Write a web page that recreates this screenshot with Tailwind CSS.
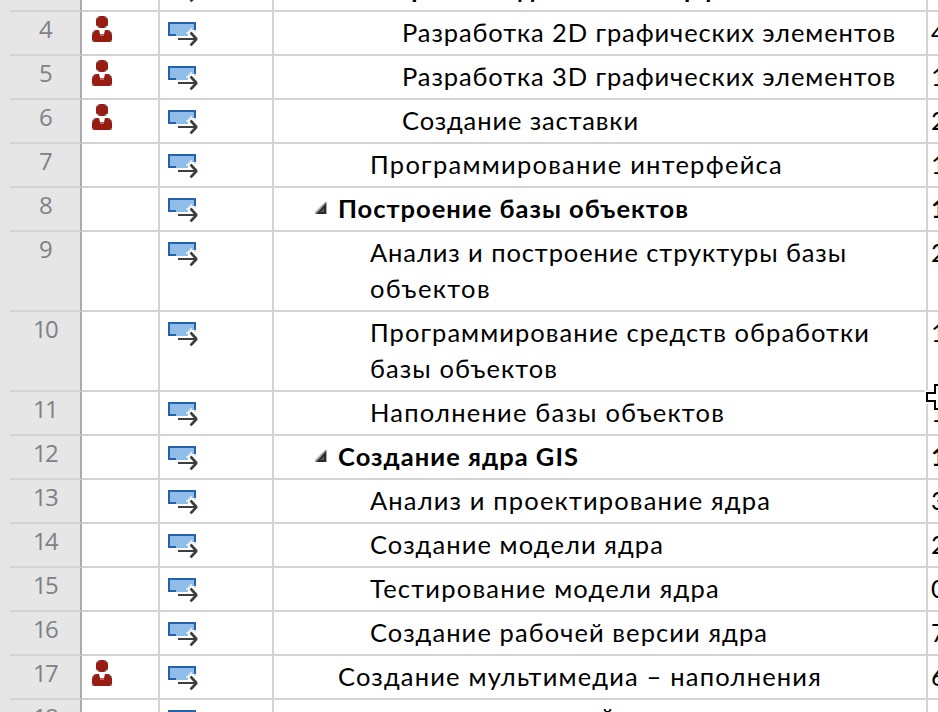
<!DOCTYPE html>
<html lang="ru">
<head>
<meta charset="utf-8">
<title>Задачи проекта</title>
<script src="https://cdn.jsdelivr.net/npm/@tailwindcss/browser@4"></script>
</head>
<body class="bg-white">
<svg class="hidden">
  <symbol id="person" viewBox="0 0 20 26">
    <path fill="#981c12" d="M8 0h4l2 1 2 2v6l-2 2-2 1H8l-2-1-2-2V3l2-2z"/>
    <path fill="#981c12" d="M3 14h4l1 4h4l1-4h4l2 2 1 3v5l-2 2H2l-2-2v-5l1-3z"/>
    <path fill="#c0605a" d="M8 18h4v2H8z"/>
    <path fill="#777" fill-opacity=".65" d="M4 2h2V0h2v1L5 3v1H4zM14 0h-2v1l3 2v1h1V2h-2zM4 10h2v2h2v-1L5 9H4zM16 10h-2v2h-2v-1l3-2h1zM0 16h2v-2h2v1l-3 2v1H0zM20 16h-2v-2h-2v1l3 2v1h1zM0 24h1l1 1v1H0zM20 24h-1l-1 1v1h2z"/>
  </symbol>
  <symbol id="auto" viewBox="0 0 30 24">
    <path fill="#90bce8" d="M0 0h28v14H0z"/>
    <path fill="#2562ae" d="M0 0h28v14h-2V2H2v10h6v2H0z"/>
    <path fill="#fff" d="M20 14v-4h2V8h4v2h2v4z"/>
    <path fill="#d5e6f7" d="M18 10h2v2h-2zM20 8h2v2h-2zM22 6h2v2h-2zM26 8h2v2h-2z"/>
    <path fill="#3e3e3a" d="M10 16h19v2H10z"/>
    <path fill="none" stroke="#3e3e3a" stroke-width="2.6" stroke-linejoin="bevel" d="M22.5 10.5l6 6.5-6 6.5"/>
  </symbol>
  <symbol id="open" viewBox="0 0 12 12">
    <path fill="#aaa" d="M0 12v-2l2-2 2-2 2-2 2-2 2-2h2v12z"/>
    <path fill="#2c2c2c" d="M1 12L11 1v11z"/>
    <path fill="#555" d="M5 10l4-4v4z"/>
  </symbol>
</svg>
<main id="grid" class="relative flex h-[712px] w-[938px] flex-col overflow-hidden bg-white font-['Lato','Noto_Sans',sans-serif] text-[25.5px] leading-[36px] text-black"></main>
<script>
// id, person flag, indent, row height, bold, lines [text, drawn width], next column
const rows = [
  [3, 0, 370, 44, 1, [['Разработка дизайна интерфейса', 404]], '1'],
  [4, 1, 402, 44, 0, [['Разработка 2D графических элементов', 494]], '4'],
  [5, 1, 402, 44, 0, [['Разработка 3D графических элементов', 494]], '1'],
  [6, 1, 402, 44, 0, [['Создание заставки', 237]], '2'],
  [7, 0, 370, 44, 0, [['Программирование интерфейса', 413]], '1'],
  [8, 0, 338, 44, 1, [['Построение базы объектов', 351]], '1'],
  [9, 0, 370, 80, 0, [['Анализ и построение структуры базы', 477], ['объектов', 121]], '2'],
  [10, 0, 370, 80, 0, [['Программирование средств обработки', 500], ['базы объектов', 188]], '1'],
  [11, 0, 370, 44, 0, [['Наполнение базы объектов', 355]], '1'],
  [12, 0, 338, 44, 1, [['Создание ядра GIS', 241]], '1'],
  [13, 0, 370, 44, 0, [['Анализ и проектирование ядра', 401]], '3'],
  [14, 0, 370, 44, 0, [['Создание модели ядра', 294]], '2'],
  [15, 0, 370, 44, 0, [['Тестирование модели ядра', 350]], '0'],
  [16, 0, 370, 44, 0, [['Создание рабочей версии ядра', 398]], '7'],
  [17, 1, 338, 44, 0, [['Создание мультимедиа – наполнения', 484]], '6'],
  [18, 0, 600, 44, 0, [['й', 15]], '']
];
const pen = document.createElement('canvas').getContext('2d');
// Tracking that spreads a line to its measure
const track = (t, w, bold) => {
  pen.font = `${bold ? 'bold ' : ''}25.5px Lato, "Noto Sans"`;
  return ((w - pen.measureText(t).width) / t.length).toFixed(3);
};
document.getElementById('grid').innerHTML = rows.map(([id, person, x, h, bold, lines, next]) => `
  <div class="flex w-full shrink-0 ${id === 3 ? '-mt-8' : ''}" style="height:${h}px">
    <div class="w-2.5 shrink-0 bg-[#e6e6e6]"></div>
    <div class="flex w-[72px] shrink-0 justify-center border-r-2 border-b-2 border-r-[#ababab] border-b-[#d3d3d3] bg-[#e6e6e6] font-['Open_Sans','Noto_Sans',sans-serif] text-[24px] leading-[34px] tracking-[-1.8px] text-[#808087]">${id}</div>
    <div class="w-[78px] shrink-0 border-r-2 border-b-2 border-[#d3d3d3] pt-1 pl-[10px]">${person ? '<svg class="h-[26px] w-5"><use href="#person"/></svg>' : ''}</div>
    <div class="w-[114px] shrink-0 border-r-2 border-b-2 border-[#d3d3d3] pt-[10px] pl-2"><svg class="h-6 w-[30px]"><use href="#auto"/></svg></div>
    <div class="relative w-[654px] shrink-0 border-r-2 border-b-2 border-[#d3d3d3] ${id === 18 ? 'pt-0' : 'pt-[2px]'} ${bold ? 'font-bold' : ''}" style="padding-left:${x - 274}px">
      ${bold ? `<svg class="absolute top-[14px] h-3 w-3" style="left:${x - 297}px"><use href="#open"/></svg>` : ''}
      ${lines.map(([t, w]) => `<div class="h-9 whitespace-nowrap ${id === 18 ? '-mt-px' : ''}" style="letter-spacing:${track(t, w, bold)}px">${t}</div>`).join('')}
    </div>
    <div class="w-[10px] shrink-0 overflow-hidden border-b-2 border-[#d3d3d3] pt-[2px] pl-[3px] ${bold ? 'font-bold' : ''}">${next}</div>
  </div>`).join('') + `
  <svg class="absolute top-[380px] left-[922px] h-9 w-4" viewBox="922 380 16 36" fill="#fff">
    <path stroke="#fff" stroke-width="5" d="M942 385h-7v8h-8v8h8v8h7"/>
    <path stroke="#000" stroke-width="2" d="M942 385h-7v8h-8v8h8v8h7"/>
  </svg>`;
</script>
</body>
</html>
